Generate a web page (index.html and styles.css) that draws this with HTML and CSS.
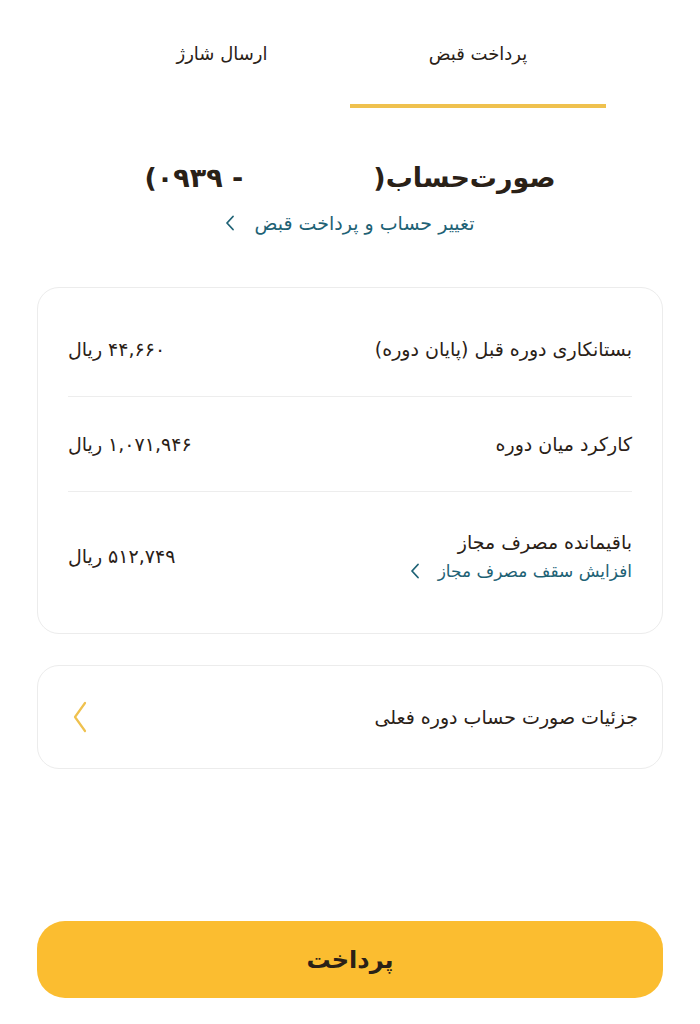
FILE: index.html
```html
<!DOCTYPE html>
<html lang="fa" dir="rtl">
<head>
    <meta charset="UTF-8">
    <title>پرداخت قبض</title>
    <link rel="stylesheet" href="styles.css">
</head>
<body>
<div class="tabs">
    <div class="tab active">پرداخت قبض</div>
    <div class="tab">ارسال شارژ</div>
</div>

<div class="head">
    <h1 class="title">صورت‌حساب(<span class="blank"></span>- ۰۹۳۹)</h1>
    <a class="link">تغییر حساب و پرداخت قبض
        <svg class="chev" width="10" height="16" viewBox="0 0 10 16"><path d="M8 1.5 L2 8 L8 14.5"/></svg>
    </a>
</div>

<div class="card">
    <div class="row">
        <div class="label">بستانکاری دوره قبل (پایان دوره)</div>
        <div class="value">۴۴,۶۶۰ ریال</div>
    </div>
    <div class="row">
        <div class="label">کارکرد میان دوره</div>
        <div class="value">۱,۰۷۱,۹۴۶ ریال</div>
    </div>
    <div class="row">
        <div class="label">
            باقیمانده مصرف مجاز
            <a class="link small">افزایش سقف مصرف مجاز
                <svg class="chev" width="10" height="16" viewBox="0 0 10 16"><path d="M8 1.5 L2 8 L8 14.5"/></svg>
            </a>
        </div>
        <div class="value">۵۱۲,۷۴۹ ریال</div>
    </div>
</div>

<div class="card details">
    <div class="label">جزئیات صورت حساب دوره فعلی</div>
    <svg class="chev big" width="16" height="32" viewBox="0 0 16 32"><path d="M13 2 L3 16 L13 30"/></svg>
</div>

<div class="footer">
    <button class="pay">پرداخت</button>
</div>
</body>
</html>
```

FILE: styles.css
```css
* {
    margin: 0;
    padding: 0;
    box-sizing: border-box;
}

html, body {
    height: 100%;
}

body {
    font-family: "DejaVu Sans", "Noto Sans", sans-serif;
    color: #2a2117;
    background: #fff;
    display: flex;
    flex-direction: column;
    padding: 0 37px 26px;
}

.tabs {
    display: flex;
    width: 512px;
    margin: 0 auto;
}

.tab {
    flex: 1;
    height: 108px;
    padding-top: 43px;
    text-align: center;
    font-size: 18px;
    border-bottom: 4px solid transparent;
}

.tab.active {
    border-bottom-color: #efc14e;
}

.head {
    display: flex;
    flex-direction: column;
    align-items: center;
    padding-top: 48px;
}

.title {
    font-size: 27px;
    font-weight: bold;
    line-height: 44px;
}

.blank {
    display: inline-block;
    width: 130px;
}

.link {
    display: flex;
    align-items: center;
    gap: 19px;
    margin-top: 12px;
    font-size: 19px;
    color: #1e6275;
}

.chev path {
    fill: none;
    stroke: currentColor;
    stroke-width: 1.8;
    stroke-linecap: round;
    stroke-linejoin: round;
}

.card {
    margin-top: 53px;
    border: 1px solid #ececec;
    border-radius: 22px;
    padding: 14px 30px;
}

.row {
    display: flex;
    justify-content: space-between;
    align-items: center;
    height: 95px;
    border-bottom: 1px solid #ededed;
}

.row:last-child {
    height: 127px;
    border-bottom: none;
}

.label,
.value {
    font-size: 19px;
}

.label .link.small {
    margin-top: 8px;
    font-size: 17px;
    gap: 18px;
}

.details {
    margin-top: 31px;
    height: 104px;
    display: flex;
    align-items: center;
    justify-content: space-between;
    padding: 0 24px 0 34px;
}

.chev.big {
    color: #efc14e;
}

.chev.big path {
    stroke-width: 2.2;
}

.footer {
    margin-top: auto;
}

.pay {
    width: 100%;
    height: 77px;
    border: none;
    border-radius: 28px;
    background: #fbbd30;
    font-family: "DejaVu Sans", sans-serif;
    color: #2a2117;
    font-size: 24px;
    font-weight: bold;
}
```
